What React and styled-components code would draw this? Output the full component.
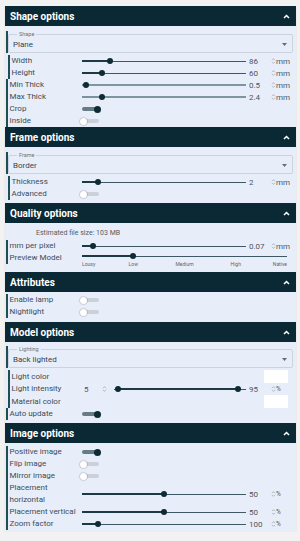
import React from 'react';
import styled, { createGlobalStyle } from 'styled-components';

const GlobalStyle = createGlobalStyle`
  body {
    margin: 0;
    background: #f2f2f3;
    font-family: Roboto, 'Liberation Sans', sans-serif;
  }
`;

const Panel = styled.div`
  width: 291px;
  margin: 6px 0 0 5px;
  padding-bottom: 1px;
  background: #e8eef9;
  box-shadow: 0 1px 1px rgba(0, 0, 0, 0.18);
`;

const Header = styled.div`
  height: 20px;
  display: flex;
  align-items: center;
  justify-content: space-between;
  padding: 0 6px 0 5px;
  background: #0b2934;
  color: #fff;
  font-size: 10px;
  font-weight: 700;
`;

const Body = styled.div`
  padding: ${({ $pad }) => $pad};
`;

const Row = styled.div`
  display: grid;
  grid-template-columns: 76px 164px 24px 6px 1fr;
  grid-template-rows: ${({ $h }) => $h || 12}px;
  padding-left: 1px;
  font-size: 8px;
  color: #3e4b54;
`;

const Label = styled.div`
  grid-column: 1;
  display: flex;
  align-items: center;
  margin-left: ${({ $indent }) => ($indent ? 2 : 0)}px;
  padding-left: 1.5px;
  border-left: 2px solid #1e4f57;
  line-height: 12px;
`;

const Value = styled.div`
  display: flex;
  align-items: center;
  padding-left: 3px;
  color: #4a565e;
`;

const SpinCell = styled.div`
  display: flex;
  align-items: center;
  justify-content: center;
`;

const Unit = styled.div`
  display: flex;
  align-items: center;
  color: #4a565e;
  font-size: ${({ $small }) => ($small ? 6.5 : 8)}px;
`;

const Track = styled.div`
  display: flex;
  align-items: center;
  align-self: center;
  height: ${({ $h }) => $h || 12}px;
  flex: 1;
`;

const Fill = styled.div`
  flex: ${({ $grow }) => ($grow ? 1 : '0 0 auto')};
  height: 2px;
  background: ${({ $muted }) => ($muted ? '#7a929b' : '#1d3944')};
`;

const Rest = styled.div`
  flex: ${({ $grow }) => ($grow ? 1 : '0 0 auto')};
  height: ${({ $muted }) => ($muted ? 2 : 1)}px;
  background: ${({ $muted }) => ($muted ? '#7f969f' : '#3e5963')};
`;

const Thumb = styled.div`
  flex: 0 0 6px;
  height: 6px;
  margin: 0 -3px;
  border-radius: 50%;
  background: #0e2a35;
  position: relative;
  z-index: 1;
`;

const SwitchTrack = styled.div`
  grid-column: 2;
  align-self: center;
  justify-self: start;
  width: 17px;
  height: 4px;
  border-radius: 2px;
  display: flex;
  align-items: center;
  justify-content: ${({ $on }) => ($on ? 'flex-end' : 'flex-start')};
  background: ${({ $on }) => ($on ? '#677c84' : '#cbd0d9')};
`;

const Knob = styled.div`
  flex: 0 0 7px;
  height: 7px;
  margin: 0 -2px;
  border-radius: 50%;
  background: ${({ $on }) => ($on ? '#0e2a35' : '#fff')};
  box-shadow: ${({ $on }) => ($on ? 'none' : '0 0 1px 0.5px rgba(0,0,0,0.25)')};
`;

const SelectWrap = styled.div`
  margin: 0 3px 2px 1px;
  height: 22px;
  border-left: 2px solid #1e4f57;
  display: flex;
`;

const Fieldset = styled.fieldset`
  flex: 1;
  margin: 0;
  padding: 0 5px 0 4px;
  border: 1px solid #ccd3df;
  border-radius: 2px;
  display: flex;
  align-items: center;
  justify-content: space-between;
  min-width: 0;
`;

const Legend = styled.legend`
  margin-left: 4px;
  padding: 0 2px;
  font-size: 5.5px;
  line-height: 6px;
  color: #6a727a;
`;

const SelectValue = styled.span`
  font-size: 8px;
  color: #38444c;
  padding-bottom: 1px;
`;

const Estimate = styled.div`
  padding-left: 31px;
  line-height: 13px;
  font-size: 7px;
  color: #535c63;
`;

const Swatch = styled.div`
  grid-column: 3 / span 3;
  align-self: center;
  margin-left: 18px;
  width: 24px;
  height: 13px;
  background: #fff;
`;

const RangeCell = styled.div`
  grid-column: 2;
  display: flex;
  align-items: center;
`;

const MinValue = styled.div`
  flex: 0 0 20px;
  padding-left: 2px;
  box-sizing: border-box;
  color: #4a565e;
`;

const RangeTrack = styled(Track)`
  margin-left: 7px;
`;

const PreviewCell = styled.div`
  grid-column: 2 / -1;
  margin-right: 9px;
  padding-top: 1px;
`;

const Ticks = styled.div`
  position: relative;
  height: 6px;
  margin-top: 2px;
`;

const Tick = styled.span`
  position: absolute;
  top: 0;
  font-size: 5px;
  line-height: 6px;
  color: #5c666d;
  white-space: nowrap;
`;

const Chevron = () => (
  <svg width="7" height="5" viewBox="0 0 7 5">
    <polyline points="1,4 3.5,1.5 6,4" fill="none" stroke="#fff" strokeWidth="1.5" />
  </svg>
);

const Spin = () => (
  <svg width="5" height="8" viewBox="0 0 5 8">
    <path d="M1 3.2 2.5 1.6 4 3.2M1 4.8 2.5 6.4 4 4.8" fill="none" stroke="#a1acb7" strokeWidth="0.8" />
  </svg>
);

const Caret = () => (
  <svg width="5" height="3" viewBox="0 0 5 3">
    <path d="M0 0h5L2.5 3z" fill="#666e75" />
  </svg>
);

const Section = ({ title, pad, children }) => (
  <>
    <Header>
      {title}
      <Chevron />
    </Header>
    <Body $pad={pad}>{children}</Body>
  </>
);

const Slider = ({ pct, muted }) => (
  <Track>
    <Fill $muted={muted} style={{ width: `${pct}%` }} />
    <Thumb />
    <Rest $muted={muted} $grow />
  </Track>
);

const SliderRow = ({ label, pct, value, unit, indent, muted, h }) => (
  <Row $h={h}>
    <Label $indent={indent}>{label}</Label>
    <Slider pct={pct} muted={muted} />
    <Value>{value}</Value>
    <SpinCell>
      <Spin />
    </SpinCell>
    <Unit $small={unit === '%'}>{unit}</Unit>
  </Row>
);

const SwitchRow = ({ label, on, indent }) => (
  <Row>
    <Label $indent={indent}>{label}</Label>
    <SwitchTrack $on={on}>
      <Knob $on={on} />
    </SwitchTrack>
  </Row>
);

const Select = ({ legend, value }) => (
  <SelectWrap>
    <Fieldset>
      <Legend>{legend}</Legend>
      <SelectValue>{value}</SelectValue>
      <Caret />
    </Fieldset>
  </SelectWrap>
);

const ColorRow = ({ label }) => (
  <Row $h={13}>
    <Label $indent>{label}</Label>
    <Swatch />
  </Row>
);

const marks = [
  { label: 'Lousy', at: 0, shift: '0' },
  { label: 'Low', at: 25, shift: '-50%' },
  { label: 'Medium', at: 50, shift: '-50%' },
  { label: 'High', at: 75, shift: '-50%' },
  { label: 'Native', at: 100, shift: '-100%' },
];

export default function App() {
  return (
    <>
      <GlobalStyle />
      <Panel>
        <Section title="Shape options" pad="5px 0 0">
          <Select legend="Shape" value="Plane" />
          <SliderRow label="Width" indent pct={17} value="86" unit="mm" />
          <SliderRow label="Height" indent pct={12} value="60" unit="mm" />
          <SliderRow label="Min Thick" muted pct={2.5} value="0.5" unit="mm" />
          <SliderRow label="Max Thick" muted pct={12} value="2.4" unit="mm" />
          <SwitchRow label="Crop" on />
          <SwitchRow label="Inside" />
        </Section>

        <Section title="Frame options" pad="5px 0 3px">
          <Select legend="Frame" value="Border" />
          <SliderRow label="Thickness" indent pct={10} value="2" unit="mm" />
          <SwitchRow label="Advanced" indent />
        </Section>

        <Section title="Quality options" pad="4px 0 8px">
          <Estimate>Estimated file size: 103 MB</Estimate>
          <SliderRow label="mm per pixel" pct={7} value="0.07" unit="mm" />
          <Row>
            <Label>Preview Model</Label>
            <PreviewCell>
              <Track $h={6}>
                <Fill style={{ width: '25%' }} />
                <Thumb />
                <Rest $grow />
              </Track>
              <Ticks>
                {marks.map((m) => (
                  <Tick key={m.label} style={{ left: `${m.at}%`, transform: `translateX(${m.shift})` }}>
                    {m.label}
                  </Tick>
                ))}
              </Ticks>
            </PreviewCell>
          </Row>
        </Section>

        <Section title="Attributes" pad="2px 0 4px">
          <SwitchRow label="Enable lamp" />
          <SwitchRow label="Nightlight" />
        </Section>

        <Section title="Model options" pad="4px 0 3px">
          <Select legend="Lighting" value="Back lighted" />
          <ColorRow label="Light color" />
          <Row>
            <Label $indent>Light intensity</Label>
            <RangeCell>
              <MinValue>5</MinValue>
              <Spin />
              <RangeTrack>
                <Rest style={{ width: '3%' }} />
                <Thumb />
                <Fill style={{ width: '91%' }} />
                <Thumb />
                <Rest $grow />
              </RangeTrack>
            </RangeCell>
            <Value>95</Value>
            <SpinCell>
              <Spin />
            </SpinCell>
            <Unit $small>%</Unit>
          </Row>
          <ColorRow label="Material color" />
          <SwitchRow label="Auto update" on />
        </Section>

        <Section title="Image options" pad="3px 0 1px">
          <SwitchRow label="Positive image" on />
          <SwitchRow label="Flip image" />
          <SwitchRow label="Mirror image" />
          <SliderRow label="Placement horizontal" h={24} pct={50} value="50" unit="%" />
          <SliderRow label="Placement vertical" pct={50} value="50" unit="%" />
          <SliderRow label="Zoom factor" pct={10} value="100" unit="%" />
        </Section>
      </Panel>
    </>
  );
}
